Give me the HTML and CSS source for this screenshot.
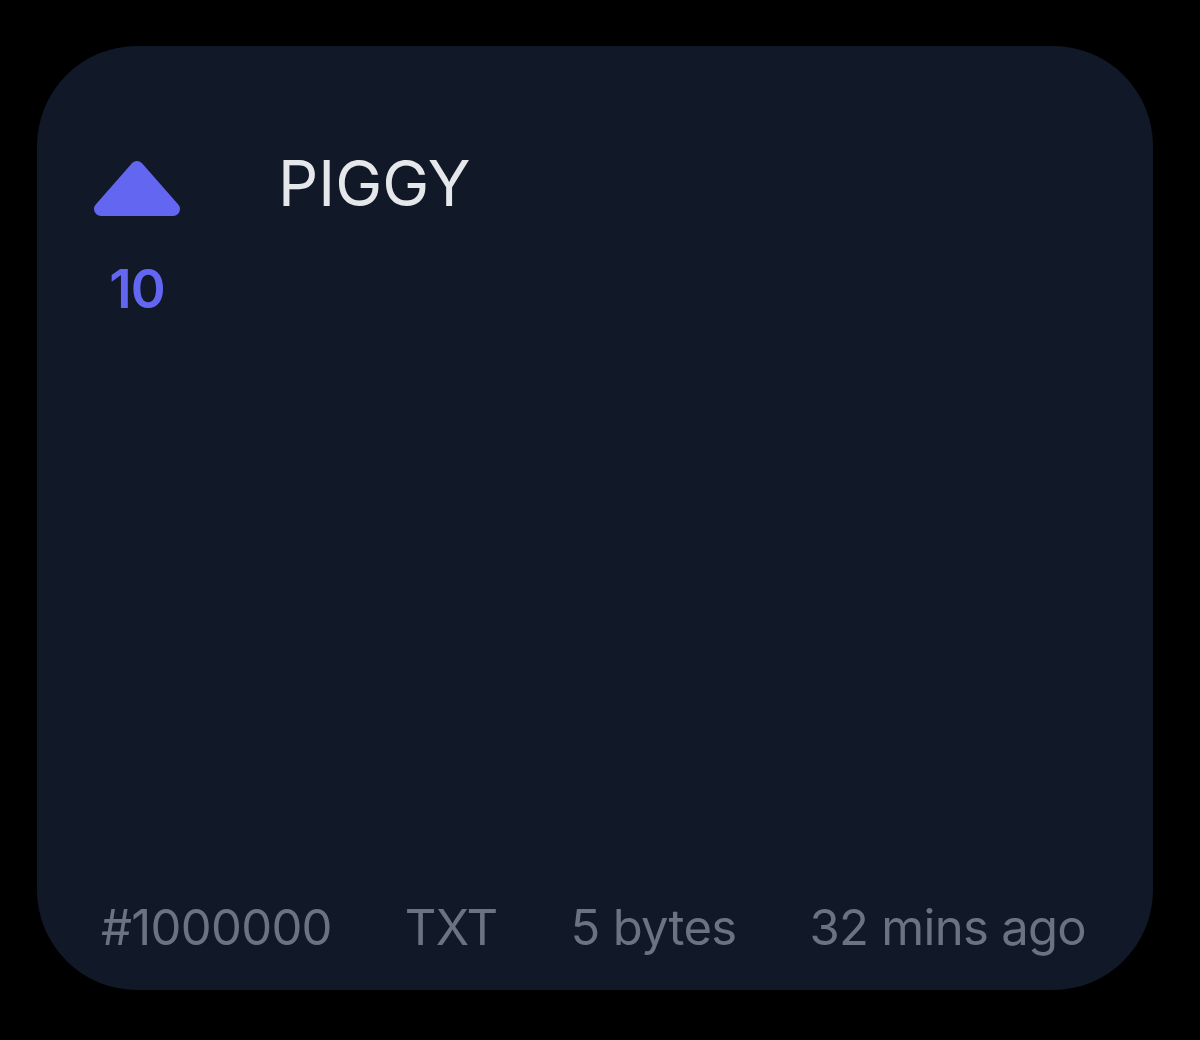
FILE: index.html
```html
<!DOCTYPE html>
<html lang="en">

<head>
  <meta charset="UTF-8">
  <meta name="viewport" content="width=device-width, initial-scale=1.0">
  <title>Inscription Card</title>
  <link rel="stylesheet" href="styles.css">
</head>

<body>
  <div class="card">
    <div class="card-main">
      <div class="vote">
        <svg class="vote-arrow" viewBox="0 0 88 58" width="88" height="58" aria-hidden="true">
          <polygon points="44,8 8,49 80,49" fill="#6366f1" stroke="#6366f1" stroke-width="14" stroke-linejoin="round" />
        </svg>
        <div class="vote-count">10</div>
      </div>
      <div class="title">PIGGY</div>
    </div>

    <div class="card-footer">
      <span>#1000000</span>
      <span>TXT</span>
      <span>5 bytes</span>
      <span>32 mins ago</span>
    </div>
  </div>
</body>

</html>
```

FILE: styles.css
```css
html,
body {
  margin: 0;
  background: #000;
}

body {
  font-family: Inter, "Noto Sans", sans-serif;
  padding: 46px 47px 50px 37px;
}

.card {
  background: #111827;
  border-radius: 100px;
  height: 944px;
  display: flex;
  flex-direction: column;
  box-sizing: border-box;
  padding: 114px 40px 32px 56px;
}

.card-main {
  flex: 1;
  display: flex;
  gap: 97px;
}

.vote {
  display: flex;
  flex-direction: column;
  align-items: center;
  width: 88px;
}

.vote-arrow {
  display: block;
}

.vote-count {
  color: #6366f1;
  font-size: 53px;
  font-weight: 600;
  line-height: 1;
  margin-top: 45px;
  letter-spacing: -1px;
}

.title {
  color: #e5e7eb;
  font-size: 63px;
  line-height: 1;
  margin-top: -8px;
}

.card-footer {
  display: flex;
  gap: 73px;
  padding-left: 8px;
  color: #6b7280;
  font-size: 49px;
  line-height: 1.2;
  white-space: nowrap;
  letter-spacing: -0.7px;
}
```
